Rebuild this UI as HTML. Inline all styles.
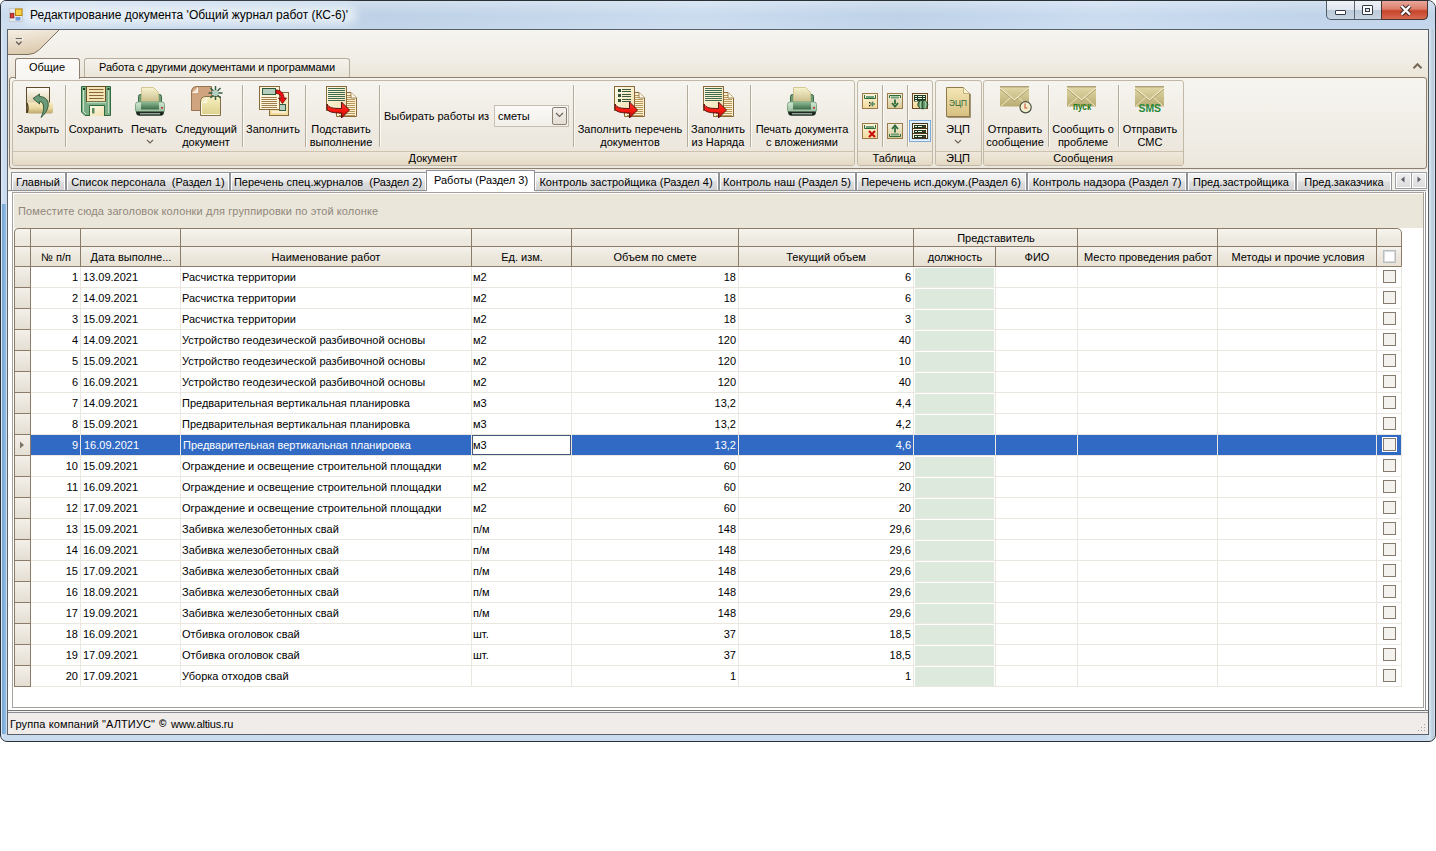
<!DOCTYPE html><html><head><meta charset="utf-8"><style>
*{box-sizing:border-box;margin:0;padding:0}
html,body{width:1436px;height:851px;background:#fff;overflow:hidden;font-family:"Liberation Sans",sans-serif;font-size:11px;color:#000}
.a{position:absolute}
.t{position:absolute;white-space:nowrap;line-height:13px}
svg{overflow:visible}
</style></head><body>
<div class="a" style="left:0px;top:0px;width:1436px;height:742px;background:linear-gradient(90deg,#dde9f6 0,#cbdcef 3px,#c8daee 1425px,#d6e4f0 1429px,#bccddd 1431px,#bccddd 1433px,#e6f2fb 1434px);border:1px solid #2b3036;border-radius:6px 8px 7px 7px"></div>
<div class="a" style="left:1px;top:1px;width:1434px;height:28px;background:linear-gradient(90deg,#c6d9ee,#b8cde4 380px,#c6d9ee 700px,#b9cee6 900px,#c6d9ef 1100px,#bbd0e8 1300px);border-radius:5px 7px 0 0"></div>
<div class="a" style="left:1px;top:1px;width:1434px;height:28px;background:linear-gradient(rgba(255,255,255,0.35),rgba(255,255,255,0.08) 14px,rgba(255,255,255,0.15) 28px);border-radius:5px 7px 0 0"></div>
<div class="a" style="left:22px;top:6px;width:335px;height:18px;background:rgba(240,245,250,0.75);border-radius:9px;filter:blur(4px)"></div>
<svg class="a" style="left:9px;top:8px" width="14" height="14" viewBox="0 0 14 14"><rect x="0.5" y="0.5" width="13" height="13" fill="#e6eaee" stroke="#c8ccd0"/><rect x="6.5" y="1" width="6.5" height="6.5" fill="#f6d04a" stroke="#b8860b"/><rect x="1.3" y="5.3" width="3.6" height="4.6" fill="#d9383a" stroke="#8c1c1c" stroke-width="0.8"/><rect x="6.5" y="9" width="5" height="3.5" fill="#6f9be0"/></svg>
<div class="t" style="left:30px;top:8px;font-size:12px;line-height:14px">Редактирование документа 'Общий журнал работ (КС-6)'</div>
<div class="a" style="left:1326px;top:1px;width:102px;height:19px;border:1px solid #4f5a66;border-top:none;border-radius:0 0 5px 5px;background:linear-gradient(#eef2f7,#dfe6ee 50%,#bccad9 51%,#c8d5e3);overflow:hidden"></div>
<div class="a" style="left:1354px;top:1px;width:1px;height:18px;background:#5c6570"></div>
<div class="a" style="left:1381px;top:1px;width:47px;height:19px;border:1px solid #4a3430;border-top:none;border-radius:0 0 5px 0;background:linear-gradient(#e9a89a,#dc7d6a 45%,#c8442a 55%,#d56a52)"></div>
<div class="a" style="left:1335px;top:10px;width:11px;height:5px;border:1px solid #353b42;background:#fff;border-radius:1px"></div>
<div class="a" style="left:1362px;top:5px;width:11px;height:10px;border:1px solid #353b42;background:#fff;border-radius:1px"></div>
<div class="a" style="left:1365px;top:8px;width:5px;height:4px;border:1px solid #353b42;background:#dde4ec"></div>
<svg class="a" style="left:1399px;top:4px" width="14" height="12" viewBox="0 0 14 12"><path d="M2.5 2 L11 10.5 M11 2 L2.5 10.5" stroke="#3a2a28" stroke-width="4.4" fill="none"/><path d="M2.5 2 L11 10.5 M11 2 L2.5 10.5" stroke="#fff" stroke-width="2.4" fill="none"/></svg>
<div class="a" style="left:2px;top:204px;width:4px;height:530px;background:linear-gradient(90deg,#74a6d5,#82b0da 2px,#95bfe3)"></div>
<div class="a" style="left:7px;top:29px;width:1422px;height:706px;border:1px solid #5a6068;background:#f3f1ec"></div>
<div class="a" style="left:8px;top:30px;width:1420px;height:140px;background:linear-gradient(#f6f4f0 0,#f1eee7 28px,#ece6d9 46px,#e9e2d3 48px,#efebe2 140px)"></div>
<svg class="a" style="left:8px;top:30px" width="60" height="26" viewBox="0 0 60 26"><defs><linearGradient id="qg" x1="0" y1="0" x2="0.3" y2="1"><stop offset="0" stop-color="#f5efe4"/><stop offset="1" stop-color="#dcc9ad"/></linearGradient></defs><path d="M0 0 L51 0 L31.5 19.5 Q26.5 24.5 20 24.5 L0 24.5 Z" fill="url(#qg)"/><path d="M51 0 L31.5 19.5 Q26.5 24.5 20 24.5 L0 24.5" fill="none" stroke="#7e705f" stroke-width="1"/></svg>
<svg class="a" style="left:14px;top:37px" width="10" height="10" viewBox="0 0 10 10"><g stroke="#fff" stroke-width="2.4" fill="none" stroke-linecap="round" opacity="0.75"><path d="M1.5 1.5 H8"/><path d="M2.5 4.8 L4.8 7 L7 4.8"/></g><path d="M1.5 1.5 H8" stroke="#6e6455" stroke-width="1.2"/><path d="M2 4.5 L4.8 7.3 L7.6 4.5" stroke="#6e6455" stroke-width="1.6" fill="none"/></svg>
<div class="a" style="left:84px;top:58px;width:266px;height:20px;border:1px solid #b9ad9b;border-bottom:none;border-radius:3px 3px 0 0;background:linear-gradient(#f5f2ec,#ebe5d8)"></div>
<div class="a" style="left:9px;top:77px;width:1418px;height:92px;border:1px solid #8e8070;border-radius:3px;background:linear-gradient(#f6f4ef,#f0ede6 60px,#ece7dd)"></div>
<div class="a" style="left:15px;top:58px;width:65px;height:21px;border:1px solid #8e8070;border-bottom:none;border-radius:3px 3px 0 0;background:linear-gradient(#fbfaf8,#f8f6f2)"></div>
<div class="t" style="left:-103px;width:300px;text-align:center;top:61px;">Общие</div>
<div class="t" style="left:67px;width:300px;text-align:center;top:61px;letter-spacing:-0.14px">Работа с другими документами и программами</div>
<svg class="a" style="left:1412px;top:62px" width="11" height="8" viewBox="0 0 11 8"><path d="M1.5 6.2 L5.5 2.2 L9.5 6.2" stroke="#76695a" stroke-width="2" fill="none"/></svg>
<div class="a" style="left:12px;top:80px;width:843px;height:86px;border:1px solid #c2b8a6;border-radius:3px;background:linear-gradient(#f6f4ef,#f0ece4 40px,#ece6dc 70px)"></div>
<div class="a" style="left:13px;top:151px;width:841px;height:14px;border-top:1px solid #cdc2ae;background:linear-gradient(#efe9dc,#e4d9c3);border-radius:0 0 2px 2px"></div>
<div class="t" style="left:283px;width:300px;text-align:center;top:152px;">Документ</div>
<div class="a" style="left:857px;top:80px;width:76px;height:86px;border:1px solid #c2b8a6;border-radius:3px;background:linear-gradient(#f6f4ef,#f0ece4 40px,#ece6dc 70px)"></div>
<div class="a" style="left:858px;top:151px;width:74px;height:14px;border-top:1px solid #cdc2ae;background:linear-gradient(#efe9dc,#e4d9c3);border-radius:0 0 2px 2px"></div>
<div class="t" style="left:744px;width:300px;text-align:center;top:152px;">Таблица</div>
<div class="a" style="left:935px;top:80px;width:47px;height:86px;border:1px solid #c2b8a6;border-radius:3px;background:linear-gradient(#f6f4ef,#f0ece4 40px,#ece6dc 70px)"></div>
<div class="a" style="left:936px;top:151px;width:45px;height:14px;border-top:1px solid #cdc2ae;background:linear-gradient(#efe9dc,#e4d9c3);border-radius:0 0 2px 2px"></div>
<div class="t" style="left:808px;width:300px;text-align:center;top:152px;">ЭЦП</div>
<div class="a" style="left:983px;top:80px;width:201px;height:86px;border:1px solid #c2b8a6;border-radius:3px;background:linear-gradient(#f6f4ef,#f0ece4 40px,#ece6dc 70px)"></div>
<div class="a" style="left:984px;top:151px;width:199px;height:14px;border-top:1px solid #cdc2ae;background:linear-gradient(#efe9dc,#e4d9c3);border-radius:0 0 2px 2px"></div>
<div class="t" style="left:933px;width:300px;text-align:center;top:152px;">Сообщения</div>
<div class="a" style="left:65px;top:85px;width:1px;height:62px;background:#b3ab9c"></div>
<div class="a" style="left:66px;top:85px;width:1px;height:62px;background:#fbf9f4"></div>
<div class="a" style="left:242px;top:85px;width:1px;height:62px;background:#b3ab9c"></div>
<div class="a" style="left:243px;top:85px;width:1px;height:62px;background:#fbf9f4"></div>
<div class="a" style="left:305px;top:85px;width:1px;height:62px;background:#b3ab9c"></div>
<div class="a" style="left:306px;top:85px;width:1px;height:62px;background:#fbf9f4"></div>
<div class="a" style="left:379px;top:85px;width:1px;height:62px;background:#b3ab9c"></div>
<div class="a" style="left:380px;top:85px;width:1px;height:62px;background:#fbf9f4"></div>
<div class="a" style="left:573px;top:85px;width:1px;height:62px;background:#b3ab9c"></div>
<div class="a" style="left:574px;top:85px;width:1px;height:62px;background:#fbf9f4"></div>
<div class="a" style="left:687px;top:85px;width:1px;height:62px;background:#b3ab9c"></div>
<div class="a" style="left:688px;top:85px;width:1px;height:62px;background:#fbf9f4"></div>
<div class="a" style="left:750px;top:85px;width:1px;height:62px;background:#b3ab9c"></div>
<div class="a" style="left:751px;top:85px;width:1px;height:62px;background:#fbf9f4"></div>
<div class="a" style="left:882px;top:85px;width:1px;height:62px;background:#b3ab9c"></div>
<div class="a" style="left:883px;top:85px;width:1px;height:62px;background:#fbf9f4"></div>
<div class="a" style="left:907px;top:85px;width:1px;height:62px;background:#b3ab9c"></div>
<div class="a" style="left:908px;top:85px;width:1px;height:62px;background:#fbf9f4"></div>
<div class="a" style="left:1048px;top:85px;width:1px;height:62px;background:#b3ab9c"></div>
<div class="a" style="left:1049px;top:85px;width:1px;height:62px;background:#fbf9f4"></div>
<div class="a" style="left:1118px;top:85px;width:1px;height:62px;background:#b3ab9c"></div>
<div class="a" style="left:1119px;top:85px;width:1px;height:62px;background:#fbf9f4"></div>
<div class="t" style="left:-112px;width:300px;text-align:center;top:123px;">Закрыть</div>
<div class="t" style="left:-54px;width:300px;text-align:center;top:123px;">Сохранить</div>
<div class="t" style="left:-1px;width:300px;text-align:center;top:123px;">Печать</div>
<div class="t" style="left:56px;width:300px;text-align:center;top:123px;">Следующий</div>
<div class="t" style="left:56px;width:300px;text-align:center;top:136px;">документ</div>
<div class="t" style="left:123px;width:300px;text-align:center;top:123px;">Заполнить</div>
<div class="t" style="left:191px;width:300px;text-align:center;top:123px;">Подставить</div>
<div class="t" style="left:191px;width:300px;text-align:center;top:136px;">выполнение</div>
<div class="t" style="left:480px;width:300px;text-align:center;top:123px;">Заполнить перечень</div>
<div class="t" style="left:480px;width:300px;text-align:center;top:136px;">документов</div>
<div class="t" style="left:568px;width:300px;text-align:center;top:123px;">Заполнить</div>
<div class="t" style="left:568px;width:300px;text-align:center;top:136px;">из Наряда</div>
<div class="t" style="left:652px;width:300px;text-align:center;top:123px;">Печать документа</div>
<div class="t" style="left:652px;width:300px;text-align:center;top:136px;">с вложениями</div>
<div class="t" style="left:808px;width:300px;text-align:center;top:123px;">ЭЦП</div>
<div class="t" style="left:865px;width:300px;text-align:center;top:123px;">Отправить</div>
<div class="t" style="left:865px;width:300px;text-align:center;top:136px;">сообщение</div>
<div class="t" style="left:933px;width:300px;text-align:center;top:123px;">Сообщить о</div>
<div class="t" style="left:933px;width:300px;text-align:center;top:136px;">проблеме</div>
<div class="t" style="left:1000px;width:300px;text-align:center;top:123px;">Отправить</div>
<div class="t" style="left:1000px;width:300px;text-align:center;top:136px;">СМС</div>
<svg class="a" style="left:146px;top:139px" width="8" height="5" viewBox="0 0 8 5"><path d="M1 1 L4 4 L7 1" stroke="#6b6155" stroke-width="1.1" fill="none"/></svg>
<svg class="a" style="left:954px;top:139px" width="8" height="5" viewBox="0 0 8 5"><path d="M1 1 L4 4 L7 1" stroke="#6b6155" stroke-width="1.1" fill="none"/></svg>
<div class="t" style="left:384px;top:110px;">Выбирать работы из</div>
<div class="a" style="left:494px;top:105px;width:75px;height:22px;border:1px solid #c7bfb2;background:linear-gradient(#fbfaf8,#f3f0ea)"></div>
<div class="t" style="left:498px;top:110px;">сметы</div>
<div class="a" style="left:552px;top:107px;width:15px;height:18px;border:1px solid #8b8072;border-radius:2px;background:linear-gradient(#f4f2ee,#e4ded3)"></div>
<svg class="a" style="left:555px;top:112px" width="9" height="6" viewBox="0 0 9 6"><path d="M1 1 L4.5 4.5 L8 1" stroke="#6b6155" stroke-width="1.1" fill="none"/></svg>
<svg width="0" height="0" style="position:absolute"><defs>
<linearGradient id="gPage" x1="0" y1="0" x2="0" y2="1"><stop offset="0" stop-color="#fffef8"/><stop offset="1" stop-color="#c9b07a"/></linearGradient>
<linearGradient id="gRoll" x1="0" y1="0" x2="0" y2="1"><stop offset="0" stop-color="#f7ebbd"/><stop offset="0.5" stop-color="#e9d9a0"/><stop offset="1" stop-color="#bca56c"/></linearGradient>
<linearGradient id="gCream" x1="0" y1="0" x2="1" y2="1"><stop offset="0" stop-color="#fffbe8"/><stop offset="1" stop-color="#f0dfae"/></linearGradient>
<linearGradient id="gPaper" x1="0" y1="0" x2="0" y2="1"><stop offset="0" stop-color="#f8f3cf"/><stop offset="1" stop-color="#c6b986"/></linearGradient>
<linearGradient id="gPrFront" x1="0" y1="0" x2="0" y2="1"><stop offset="0" stop-color="#8dbb95"/><stop offset="1" stop-color="#3c6c47"/></linearGradient>
<linearGradient id="gPrBody" x1="0" y1="0" x2="0" y2="1"><stop offset="0" stop-color="#d4e9d4"/><stop offset="1" stop-color="#93b99a"/></linearGradient>
<linearGradient id="gYel" x1="0" y1="0" x2="0" y2="1"><stop offset="0" stop-color="#f6f0c2"/><stop offset="1" stop-color="#ddd08a"/></linearGradient>
<linearGradient id="gEcp" x1="0" y1="0" x2="0" y2="1"><stop offset="0" stop-color="#f4e7b6"/><stop offset="1" stop-color="#d7bf80"/></linearGradient>
<linearGradient id="gEnv" x1="0" y1="0" x2="0" y2="1"><stop offset="0" stop-color="#e2d9a8"/><stop offset="1" stop-color="#b9ab72"/></linearGradient>
<linearGradient id="gRed" x1="0" y1="0" x2="0" y2="1"><stop offset="0" stop-color="#e83a2a"/><stop offset="0.5" stop-color="#ff1a10"/><stop offset="1" stop-color="#a8100e"/></linearGradient>
<linearGradient id="gSm" x1="0" y1="0" x2="0" y2="1"><stop offset="0" stop-color="#fdf6dc"/><stop offset="1" stop-color="#f1d99a"/></linearGradient>
<linearGradient id="gSm2" x1="0" y1="0" x2="0" y2="1"><stop offset="0" stop-color="#f4f0dc"/><stop offset="1" stop-color="#d8cb98"/></linearGradient>
</defs></svg>
<svg class="a" style="left:20px;top:82px" width="40" height="40" viewBox="0 0 40 40"><rect x="6.5" y="5.5" width="23" height="25" fill="url(#gPage)" stroke="#5e4a2c"/><rect x="7" y="20.5" width="26" height="11" rx="2" fill="url(#gRoll)"/><path d="M7 21 Q9 26 7 31" stroke="#4a3a20" stroke-width="1.4" fill="none"/><path d="M13 16.5 L19.5 12 L19.5 14.5 C25.5 14.5 29.5 19 28 25 C27 29 24.5 32.5 21 35.5 C23 31.5 24 27.5 23.5 24 C23 21 21.5 19.5 19.5 19.5 L19.5 22 Z" fill="#6a9a78" stroke="#2e5438" stroke-width="0.9"/></svg>
<svg class="a" style="left:76px;top:82px" width="40" height="40" viewBox="0 0 40 40"><path d="M5.5 4.5 H34.5 V33.5 H9 L5.5 30 Z" fill="#7eae88" stroke="#2f6a3c"/><path d="M7.5 7 V29.5 L10 32" stroke="#c9e6cc" stroke-width="1" fill="none"/><rect x="10.5" y="4.5" width="19" height="15" fill="#f4e3b6" stroke="#6a4f20"/><g stroke="#8a6834" stroke-width="1"><path d="M13 7.5 H27.5 M13 10.5 H27.5 M13 13.5 H27.5 M13 16.5 H27.5"/></g><path d="M11 20.5 H30" stroke="#b7dbbd" stroke-width="1.5"/><path d="M13.5 34 V23.5 H28.5 V34" fill="url(#gCream)" stroke="#2f6a3c"/><path d="M32.5 7 V31" stroke="#b9dcbf" stroke-width="1"/><rect x="16" y="26" width="2.5" height="5.5" fill="#5b8a62"/><rect x="7" y="6" width="2" height="2" fill="#1f3a25"/><rect x="31.5" y="6" width="2" height="2" fill="#1f3a25"/></svg>
<svg class="a" style="left:130px;top:82px" width="40" height="40" viewBox="0 0 40 40"><rect x="8.5" y="12.5" width="23" height="9" rx="2" fill="#6f9d78" stroke="#3a6643"/><path d="M11.5 5.5 H23.5 L28.5 10.5 V21 H11.5 Z" fill="url(#gPaper)" stroke="#c9bd80" stroke-width="0.8"/><rect x="5.5" y="20" width="29" height="10.5" rx="2.5" fill="url(#gPrBody)" stroke="#6a9872" stroke-width="0.8"/><rect x="11" y="20" width="18" height="7.5" fill="url(#gPrFront)"/><path d="M6 29.5 H34 Q34 33.8 30.5 33.8 H9.5 Q6 33.8 6 29.5 Z" fill="#1d2a20"/><path d="M10 31.8 H30" stroke="#c3d8c6" stroke-width="1"/><rect x="31" y="25" width="2" height="1.6" fill="#c03030"/></svg>
<svg class="a" style="left:782px;top:82px" width="40" height="40" viewBox="0 0 40 40"><rect x="8.5" y="12.5" width="23" height="9" rx="2" fill="#6f9d78" stroke="#3a6643"/><path d="M11.5 5.5 H23.5 L28.5 10.5 V21 H11.5 Z" fill="url(#gPaper)" stroke="#c9bd80" stroke-width="0.8"/><rect x="5.5" y="20" width="29" height="10.5" rx="2.5" fill="url(#gPrBody)" stroke="#6a9872" stroke-width="0.8"/><rect x="11" y="20" width="18" height="7.5" fill="url(#gPrFront)"/><path d="M6 29.5 H34 Q34 33.8 30.5 33.8 H9.5 Q6 33.8 6 29.5 Z" fill="#1d2a20"/><path d="M10 31.8 H30" stroke="#c3d8c6" stroke-width="1"/><rect x="31" y="25" width="2" height="1.6" fill="#c03030"/></svg>
<svg class="a" style="left:186px;top:82px" width="40" height="40" viewBox="0 0 40 40"><path d="M11 4.5 H25.5 V28.5 H5.5 V10 Q5.5 4.5 11 4.5 Z" fill="#cfa47f" stroke="#9a7552"/><path d="M6.5 10.5 H11.5 V5.5" fill="#f4e2d0" stroke="#fffaf4" stroke-width="0.9"/><path d="M20 14.5 H34.5 V33.5 H14.5 V20 Q14.5 14.5 20 14.5 Z" fill="url(#gYel)" stroke="#85704a"/><path d="M15.5 20.5 V32.5 H33.5" stroke="#fffbe8" stroke-width="1" fill="none"/><path d="M15.5 20.5 H20.5 V15.5" fill="#f8f2d2" stroke="#fffdf0" stroke-width="0.9"/><g stroke="#355e45" stroke-width="1.5"><path d="M29.5 4 V18 M22.5 11 H36.5 M24.5 6 L34.5 16 M34.5 6 L24.5 16"/></g><circle cx="29.5" cy="11" r="3" fill="#b3cfbf"/></svg>
<svg class="a" style="left:254px;top:82px" width="40" height="40" viewBox="0 0 40 40"><rect x="15.5" y="10.5" width="19" height="23" fill="url(#gSm)" stroke="#8a6a3a"/><rect x="25.5" y="22.5" width="6" height="6" fill="#b6cfbf" stroke="#2f5c3d"/><path d="M18 30 H32" stroke="#fff" stroke-width="1"/><rect x="5.5" y="4.5" width="20" height="23" fill="#fdf6dc" stroke="#8a6a3a"/><rect x="8.5" y="6.5" width="13" height="6" fill="#b4cdbd" stroke="#2f5c3d"/><g stroke="#a07e4a" stroke-width="1"><path d="M7.5 15.5 H23 M7.5 17.5 H23 M7.5 19.5 H23 M7.5 21.5 H23 M7.5 23.5 H23 M7.5 25.5 H23"/></g><path d="M22 8 C26 8 30 10.5 30 16 L32.5 16 L28.5 21.5 L24.5 16 L27 16 C27 13 25 11.5 22 11.5 Z" fill="#f01010" stroke="#6a0808" stroke-width="0.8"/></svg>
<svg class="a" style="left:320px;top:82px" width="40" height="40" viewBox="0 0 40 40"><path d="M16.5 10.5 H31 L36.5 16 V34.5 H16.5 Z" fill="#fbf0cf" stroke="#8a6a3a"/><path d="M19 13.5 H35 M19 15.5 H35 M19 17.5 H35 M19 19.5 H35 M19 21.5 H35 M19 23.5 H35 M19 25.5 H35 M19 27.5 H35 M19 29.5 H35 M19 31.5 H35 M19 33.5 H35 " stroke="#b9975a" stroke-width="1"/><path d="M31 10.5 V16 H36.5" fill="#fffbe8" stroke="#8a6a3a" stroke-width="0.8"/><rect x="6.5" y="4.5" width="20" height="24" fill="url(#gCream)" stroke="#8a6a3a"/><g stroke="#3f6a4e" stroke-width="1"><path d="M8 6.5 H25 M8 8.5 H25 M8 10.5 H25 M8 12.5 H25 M8 14.5 H25 M8 16.5 H25 M8 18.5 H25"/></g><path d="M7 22 C9 26 13 26.5 21.5 26.5 V20 L29.5 28 L21.5 36 V31 C13 31 8.5 30 7 27 Z" fill="url(#gRed)" stroke="#4a0a0a" stroke-width="0.9"/></svg>
<svg class="a" style="left:608px;top:82px" width="40" height="40" viewBox="0 0 40 40"><path d="M16.5 10.5 H31 L36.5 16 V34.5 H16.5 Z" fill="#fbf0cf" stroke="#8a6a3a"/><path d="M19 13.5 H35 M19 15.5 H35 M19 17.5 H35 M19 19.5 H35 M19 21.5 H35 M19 23.5 H35 M19 25.5 H35 M19 27.5 H35 M19 29.5 H35 M19 31.5 H35 M19 33.5 H35 " stroke="#b9975a" stroke-width="1"/><path d="M31 10.5 V16 H36.5" fill="#fffbe8" stroke="#8a6a3a" stroke-width="0.8"/><rect x="6.5" y="4.5" width="20" height="24" fill="url(#gCream)" stroke="#8a6a3a"/><g fill="#2f4f35"><rect x="10" y="7" width="3" height="3"/><rect x="10" y="12" width="3" height="3"/><rect x="10" y="17" width="3" height="3"/></g><g stroke="#3a5a40" stroke-width="1"><path d="M14 7.5 H23 M14 9.5 H23 M14 12.5 H23 M14 14.5 H23 M14 17.5 H23 M14 19.5 H23"/></g><path d="M7 22 C9 26 13 26.5 21.5 26.5 V20 L29.5 28 L21.5 36 V31 C13 31 8.5 30 7 27 Z" fill="url(#gRed)" stroke="#4a0a0a" stroke-width="0.9"/></svg>
<svg class="a" style="left:698px;top:82px" width="40" height="40" viewBox="0 0 40 40"><path d="M15.5 10.5 H30 L35.5 16 V34.5 H15.5 Z" fill="#fbf0cf" stroke="#8a6a3a"/><path d="M18 13.5 H34 M18 15.5 H34 M18 17.5 H34 M18 19.5 H34 M18 21.5 H34 M18 23.5 H34 M18 25.5 H34 M18 27.5 H34 M18 29.5 H34 M18 31.5 H34 M18 33.5 H34 " stroke="#b9975a" stroke-width="1"/><path d="M30 10.5 V16 H35.5" fill="#fffbe8" stroke="#8a6a3a" stroke-width="0.8"/><rect x="5.5" y="4.5" width="20" height="24" fill="url(#gCream)" stroke="#8a6a3a"/><g stroke="#3f6a4e" stroke-width="1"><path d="M7 6.5 H24 M7 8.5 H24 M7 10.5 H24 M7 12.5 H24 M7 14.5 H24 M7 16.5 H24 M7 18.5 H24"/></g><path d="M6 22 C8 26 12 26.5 20.5 26.5 V20 L28.5 28 L20.5 36 V31 C12 31 7.5 30 6 27 Z" fill="url(#gRed)" stroke="#4a0a0a" stroke-width="0.9"/></svg>
<svg class="a" style="left:936px;top:82px" width="40" height="40" viewBox="0 0 40 40"><path d="M10.5 5.5 H27.5 L33.5 11.5 V34.5 H10.5 Z" fill="url(#gEcp)" stroke="#8f7a4a"/><path d="M11.5 35.5 H34.5 V12" stroke="#6d5a30" stroke-width="1" fill="none" opacity="0.6"/><path d="M27.5 5.5 V11.5 H33.5" fill="#fbf3d6" stroke="#b8a270" stroke-width="0.8"/><text x="13" y="24.2" textLength="18" lengthAdjust="spacingAndGlyphs" font-family="Liberation Sans" font-size="9.8" fill="#336a38">ЭЦП</text></svg>
<svg class="a" style="left:996px;top:82px" width="40" height="40" viewBox="0 0 40 40"><rect x="4" y="4.5" width="29" height="20" fill="url(#gEnv)"/><path d="M4 4.8 H33" stroke="#8f8458" stroke-width="1"/><path d="M4 6 L18.5 18 L33 6" stroke="#f4eccc" stroke-width="1.2" fill="none"/><path d="M4 7 L18.5 19 L33 7" stroke="#9c8f5c" stroke-width="0.8" fill="none"/><path d="M5 24 L14.5 15.5 M32 24 L22.5 15.5" stroke="#efe6c4" stroke-width="1" fill="none"/><circle cx="29.6" cy="25.3" r="5.6" fill="#f3efcd" stroke="#4d5245" stroke-width="1.2"/><path d="M29 21.5 V26 H31.5" stroke="#d04a3a" stroke-width="1.1" fill="none"/></svg>
<svg class="a" style="left:1062px;top:82px" width="40" height="40" viewBox="0 0 40 40"><rect x="5" y="4.5" width="29" height="20" fill="url(#gEnv)"/><path d="M5 4.8 H34" stroke="#8f8458" stroke-width="1"/><path d="M5 6 L19.5 18 L34 6" stroke="#f4eccc" stroke-width="1.2" fill="none"/><path d="M5 7 L19.5 19 L34 7" stroke="#9c8f5c" stroke-width="0.8" fill="none"/><path d="M6 24 L15.5 15.5 M33 24 L23.5 15.5" stroke="#efe6c4" stroke-width="1" fill="none"/><text x="11" y="27.8" textLength="18" lengthAdjust="spacingAndGlyphs" font-family="Liberation Sans" font-weight="bold" font-size="10.5" fill="#257a18">пуск</text></svg>
<svg class="a" style="left:1130px;top:82px" width="40" height="40" viewBox="0 0 40 40"><rect x="5" y="4.5" width="29" height="20" fill="url(#gEnv)"/><path d="M5 4.8 H34" stroke="#8f8458" stroke-width="1"/><path d="M5 6 L19.5 18 L34 6" stroke="#f4eccc" stroke-width="1.2" fill="none"/><path d="M5 7 L19.5 19 L34 7" stroke="#9c8f5c" stroke-width="0.8" fill="none"/><path d="M6 24 L15.5 15.5 M33 24 L23.5 15.5" stroke="#efe6c4" stroke-width="1" fill="none"/><text x="8.5" y="29.6" textLength="22.5" lengthAdjust="spacingAndGlyphs" font-family="Liberation Sans" font-weight="bold" font-size="11.3" fill="#2a8a3a">SMS</text></svg>
<svg class="a" style="left:862px;top:93px" width="16" height="16" viewBox="0 0 16 16"><rect x="0.5" y="0.5" width="15" height="15" fill="url(#gSm)" stroke="#9a7a48"/><path d="M2.5 2 V5.5 H13.5 V2" stroke="#2f6a3c" stroke-width="1" fill="none"/><rect x="4" y="3" width="8" height="2" fill="#6fa27c"/><path d="M10.5 8.5 V13.5 M8 11 H13" stroke="#5a8a66" stroke-width="1.6"/><rect x="7" y="9" width="1.3" height="1.3" fill="#111"/><rect x="7" y="12" width="1.3" height="1.3" fill="#111"/></svg>
<svg class="a" style="left:887px;top:93px" width="16" height="16" viewBox="0 0 16 16"><rect x="0.5" y="0.5" width="15" height="15" fill="url(#gSm2)" stroke="#9a7a48"/><path d="M2.5 5 V2.5 H13.5 V5" stroke="#2f6a3c" stroke-width="1" fill="none"/><rect x="4" y="3.5" width="8" height="2" fill="#6fa27c"/><path d="M8 6.5 V11 M5 10 L8 13.5 L11 10" stroke="#2f6a3c" stroke-width="1.8" fill="none"/></svg>
<svg class="a" style="left:912px;top:93px" width="16" height="16" viewBox="0 0 16 16"><rect x="0.5" y="0.5" width="15" height="15" fill="url(#gSm)" stroke="#6a4a2a"/><rect x="2" y="2" width="12" height="6.5" fill="#1f3a22"/><g fill="#e6f2e0"><rect x="3" y="3" width="2" height="1"/><rect x="6" y="3" width="4" height="1"/><rect x="11" y="3" width="2" height="1"/><rect x="3" y="5" width="2" height="1"/><rect x="6" y="5" width="4" height="1"/><rect x="11" y="5" width="2" height="1"/><rect x="3" y="7" width="2" height="1"/></g><ellipse cx="10.8" cy="11.6" rx="5" ry="4.2" fill="#5f9466" stroke="#22452a" stroke-width="1"/><path d="M9 8 Q7.6 11.6 9 15.4 M12.8 7.8 Q14.6 11.6 12.8 15.4" stroke="#a3d0a8" stroke-width="1.1" fill="none"/><path d="M10.8 7.5 Q9.8 11.6 10.8 15.8" stroke="#22452a" stroke-width="0.9" fill="none"/></svg>
<svg class="a" style="left:862px;top:123px" width="16" height="16" viewBox="0 0 16 16"><rect x="0.5" y="0.5" width="15" height="15" fill="url(#gSm)" stroke="#9a7a48"/><path d="M2.5 2 V5.5 H13.5 V2" stroke="#2f6a3c" stroke-width="1" fill="none"/><rect x="4" y="3" width="8" height="2" fill="#6fa27c"/><path d="M7 8 L13 14 M13 8 L7 14" stroke="#c81010" stroke-width="2.2"/></svg>
<svg class="a" style="left:887px;top:123px" width="16" height="16" viewBox="0 0 16 16"><rect x="0.5" y="0.5" width="15" height="15" fill="url(#gSm2)" stroke="#9a7a48"/><path d="M2.5 11 V13.5 H13.5 V11" stroke="#2f6a3c" stroke-width="1" fill="none"/><rect x="4" y="10.5" width="8" height="2" fill="#6fa27c"/><path d="M8 9.5 V4.5 M5 6 L8 2.5 L11 6" stroke="#2f6a3c" stroke-width="1.8" fill="none"/></svg>
<div class="a" style="left:909px;top:120px;width:22px;height:22px;border:1px solid #7ea9d6;background:linear-gradient(#d8ecfc,#c4e2fa);box-shadow:inset 0 0 0 1px #e4f2fd"></div>
<svg class="a" style="left:912px;top:123px" width="16" height="16" viewBox="0 0 16 16"><rect x="0" y="0" width="16" height="16" fill="#4a3520"/><rect x="1" y="1" width="14" height="4" fill="#fff6e0"/><rect x="2" y="2" width="12" height="3" fill="#1f3a22"/><rect x="3" y="3" width="2" height="1" fill="#e6f2e0"/><rect x="6" y="3" width="4" height="1" fill="#e6f2e0"/><rect x="11" y="3" width="2" height="1" fill="#7a3020"/><rect x="1" y="6" width="14" height="4" fill="#fff6e0"/><rect x="2" y="7" width="12" height="3" fill="#1f3a22"/><rect x="3" y="8" width="2" height="1" fill="#e6f2e0"/><rect x="6" y="8" width="4" height="1" fill="#e6f2e0"/><rect x="11" y="8" width="2" height="1" fill="#7a3020"/><rect x="1" y="11" width="14" height="4" fill="#fff6e0"/><rect x="2" y="12" width="12" height="3" fill="#1f3a22"/><rect x="3" y="13" width="2" height="1" fill="#e6f2e0"/><rect x="6" y="13" width="4" height="1" fill="#e6f2e0"/><rect x="11" y="13" width="2" height="1" fill="#7a3020"/></svg>
<div class="a" style="left:8px;top:170px;width:1420px;height:23px;background:#f3f1ec"></div>
<div class="a" style="left:8px;top:190px;width:1418px;height:1px;background:#8f9296"></div>
<div class="a" style="left:11px;top:172px;width:55px;height:19px;border:1px solid #8f9296;background:linear-gradient(#f4f4f4,#ececec 8px,#dedede 9px,#d2d2d2);box-shadow:inset 1px 1px 0 #fff,inset -1px 0 0 #fff"></div>
<div class="t" style="left:-112px;width:300px;text-align:center;top:176px;">Главный</div>
<div class="a" style="left:66px;top:172px;width:164px;height:19px;border:1px solid #8f9296;background:linear-gradient(#f4f4f4,#ececec 8px,#dedede 9px,#d2d2d2);box-shadow:inset 1px 1px 0 #fff,inset -1px 0 0 #fff"></div>
<div class="t" style="left:-2px;width:300px;text-align:center;top:176px;">Список персонала&nbsp; (Раздел 1)</div>
<div class="a" style="left:230px;top:172px;width:197px;height:19px;border:1px solid #8f9296;background:linear-gradient(#f4f4f4,#ececec 8px,#dedede 9px,#d2d2d2);box-shadow:inset 1px 1px 0 #fff,inset -1px 0 0 #fff"></div>
<div class="t" style="left:178px;width:300px;text-align:center;top:176px;">Перечень спец.журналов&nbsp; (Раздел 2)</div>
<div class="a" style="left:534px;top:172px;width:185px;height:19px;border:1px solid #8f9296;background:linear-gradient(#f4f4f4,#ececec 8px,#dedede 9px,#d2d2d2);box-shadow:inset 1px 1px 0 #fff,inset -1px 0 0 #fff"></div>
<div class="t" style="left:476px;width:300px;text-align:center;top:176px;">Контроль застройщика (Раздел 4)</div>
<div class="a" style="left:719px;top:172px;width:137px;height:19px;border:1px solid #8f9296;background:linear-gradient(#f4f4f4,#ececec 8px,#dedede 9px,#d2d2d2);box-shadow:inset 1px 1px 0 #fff,inset -1px 0 0 #fff"></div>
<div class="t" style="left:637px;width:300px;text-align:center;top:176px;">Контроль наш (Раздел 5)</div>
<div class="a" style="left:856px;top:172px;width:171px;height:19px;border:1px solid #8f9296;background:linear-gradient(#f4f4f4,#ececec 8px,#dedede 9px,#d2d2d2);box-shadow:inset 1px 1px 0 #fff,inset -1px 0 0 #fff"></div>
<div class="t" style="left:791px;width:300px;text-align:center;top:176px;">Перечень исп.докум.(Раздел 6)</div>
<div class="a" style="left:1027px;top:172px;width:160px;height:19px;border:1px solid #8f9296;background:linear-gradient(#f4f4f4,#ececec 8px,#dedede 9px,#d2d2d2);box-shadow:inset 1px 1px 0 #fff,inset -1px 0 0 #fff"></div>
<div class="t" style="left:957px;width:300px;text-align:center;top:176px;">Контроль надзора (Раздел 7)</div>
<div class="a" style="left:1187px;top:172px;width:109px;height:19px;border:1px solid #8f9296;background:linear-gradient(#f4f4f4,#ececec 8px,#dedede 9px,#d2d2d2);box-shadow:inset 1px 1px 0 #fff,inset -1px 0 0 #fff"></div>
<div class="t" style="left:1091px;width:300px;text-align:center;top:176px;">Пред.застройщика</div>
<div class="a" style="left:1296px;top:172px;width:96px;height:19px;border:1px solid #8f9296;background:linear-gradient(#f4f4f4,#ececec 8px,#dedede 9px,#d2d2d2);box-shadow:inset 1px 1px 0 #fff,inset -1px 0 0 #fff"></div>
<div class="t" style="left:1194px;width:300px;text-align:center;top:176px;">Пред.заказчика</div>
<div class="a" style="left:426px;top:170px;width:109px;height:22px;border:1px solid #8f9296;border-bottom:none;background:#fff"></div>
<div class="t" style="left:434px;top:174px;">Работы (Раздел 3)</div>
<div class="a" style="left:1395px;top:172px;width:32px;height:17px;border:1px solid #9c9fa3;background:#f4f4f4"></div>
<div class="a" style="left:1396px;top:173px;width:15px;height:15px;border:1px solid #fff;background:linear-gradient(#eeeeee,#dcdcdc)"></div>
<div class="a" style="left:1411px;top:172px;width:1px;height:17px;background:#9c9fa3"></div>
<div class="a" style="left:1412px;top:173px;width:14px;height:15px;border:1px solid #fff;background:linear-gradient(#eeeeee,#dcdcdc)"></div>
<svg class="a" style="left:1400px;top:176px" width="6" height="7" viewBox="0 0 6 7"><path d="M4.5 0.5 L1 3.5 L4.5 6.5 Z" fill="#5c5e68"/></svg>
<svg class="a" style="left:1416px;top:176px" width="6" height="7" viewBox="0 0 6 7"><path d="M1.5 0.5 L5 3.5 L1.5 6.5 Z" fill="#5c5e68"/></svg>
<div class="a" style="left:8px;top:192px;width:1420px;height:519px;background:#fff"></div>
<div class="a" style="left:12px;top:192px;width:1412px;height:516px;border:1px solid #a6a29b;background:#fff"></div>
<div class="a" style="left:426px;top:191px;width:109px;height:1px;background:#fff"></div>
<div class="a" style="left:8px;top:710px;width:1420px;height:1px;background:#707478"></div>
<div class="a" style="left:1425px;top:192px;width:1px;height:519px;background:#8e9094"></div>
<div class="a" style="left:14px;top:194px;width:1409px;height:34px;background:#ebe6da"></div>
<div class="t" style="left:18px;top:205px;color:#8f877a;letter-spacing:0.11px">Поместите сюда заголовок колонки для группировки по этой колонке</div>
<div class="a" style="left:14px;top:228px;width:1388px;height:39px;border:1px solid #8c7b69;border-radius:4px 5px 0 0;background:linear-gradient(#f7f5f0,#eeeae1 10px,#e9e3d6);overflow:hidden"></div>
<div class="a" style="left:15px;top:247px;width:1386px;height:19px;background:linear-gradient(#f4f2ec,#ece7dc 10px,#e8e2d5)"></div>
<div class="a" style="left:15px;top:246px;width:1386px;height:1px;background:#8c7b69"></div>
<div class="a" style="left:15px;top:266px;width:1386px;height:1px;background:#8c7b69"></div>
<div class="a" style="left:30px;top:229px;width:1px;height:37px;background:#8c7b69"></div>
<div class="a" style="left:80px;top:229px;width:1px;height:37px;background:#8c7b69"></div>
<div class="a" style="left:180px;top:229px;width:1px;height:37px;background:#8c7b69"></div>
<div class="a" style="left:471px;top:229px;width:1px;height:37px;background:#8c7b69"></div>
<div class="a" style="left:571px;top:229px;width:1px;height:37px;background:#8c7b69"></div>
<div class="a" style="left:738px;top:229px;width:1px;height:37px;background:#8c7b69"></div>
<div class="a" style="left:913px;top:229px;width:1px;height:37px;background:#8c7b69"></div>
<div class="a" style="left:995px;top:247px;width:1px;height:19px;background:#8c7b69"></div>
<div class="a" style="left:1077px;top:229px;width:1px;height:37px;background:#8c7b69"></div>
<div class="a" style="left:1217px;top:229px;width:1px;height:37px;background:#8c7b69"></div>
<div class="a" style="left:1376px;top:229px;width:1px;height:37px;background:#8c7b69"></div>
<div class="t" style="left:-94px;width:300px;text-align:center;top:251px;">№ п/п</div>
<div class="t" style="left:-19px;width:300px;text-align:center;top:251px;">Дата выполне...</div>
<div class="t" style="left:176px;width:300px;text-align:center;top:251px;">Наименование работ</div>
<div class="t" style="left:372px;width:300px;text-align:center;top:251px;">Ед. изм.</div>
<div class="t" style="left:505px;width:300px;text-align:center;top:251px;">Объем по смете</div>
<div class="t" style="left:676px;width:300px;text-align:center;top:251px;">Текущий объем</div>
<div class="t" style="left:805px;width:300px;text-align:center;top:251px;">должность</div>
<div class="t" style="left:887px;width:300px;text-align:center;top:251px;">ФИО</div>
<div class="t" style="left:998px;width:300px;text-align:center;top:251px;">Место проведения работ</div>
<div class="t" style="left:1148px;width:300px;text-align:center;top:251px;">Методы и прочие условия</div>
<div class="t" style="left:846px;width:300px;text-align:center;top:232px;">Представитель</div>
<div class="a" style="left:1383px;top:250px;width:13px;height:13px;border:1px solid #b9bcc0;background:#fff"></div>
<div class="a" style="left:1384px;top:251px;width:11px;height:11px;border:1px solid #d8dadc;background:#fff"></div>
<div class="a" style="left:14px;top:267px;width:1px;height:420px;background:#8c7b69"></div>
<div class="a" style="left:15px;top:267px;width:15px;height:20px;background:linear-gradient(#f3f0ea,#e4ded2)"></div>
<div class="a" style="left:15px;top:287px;width:15px;height:1px;background:#8c7b69"></div>
<div class="a" style="left:31px;top:287px;width:1370px;height:1px;background:#eae7e0"></div>
<div class="a" style="left:915px;top:268px;width:79px;height:19px;background:#dde9dc"></div>
<div class="t" style="left:30px;width:48px;text-align:right;top:271px;color:#000">1</div>
<div class="t" style="left:83px;top:271px;color:#000">13.09.2021</div>
<div class="t" style="left:182px;top:271px;color:#000">Расчистка территории</div>
<div class="t" style="left:473px;top:271px;color:#000">м2</div>
<div class="t" style="left:571px;width:165px;text-align:right;top:271px;color:#000">18</div>
<div class="t" style="left:738px;width:173px;text-align:right;top:271px;color:#000">6</div>
<div class="a" style="left:1383px;top:270px;width:13px;height:13px;border:1px solid #857a6b;background:#f4f2ee"></div>
<div class="a" style="left:15px;top:288px;width:15px;height:20px;background:linear-gradient(#f3f0ea,#e4ded2)"></div>
<div class="a" style="left:15px;top:308px;width:15px;height:1px;background:#8c7b69"></div>
<div class="a" style="left:31px;top:308px;width:1370px;height:1px;background:#eae7e0"></div>
<div class="a" style="left:915px;top:289px;width:79px;height:19px;background:#dde9dc"></div>
<div class="t" style="left:30px;width:48px;text-align:right;top:292px;color:#000">2</div>
<div class="t" style="left:83px;top:292px;color:#000">14.09.2021</div>
<div class="t" style="left:182px;top:292px;color:#000">Расчистка территории</div>
<div class="t" style="left:473px;top:292px;color:#000">м2</div>
<div class="t" style="left:571px;width:165px;text-align:right;top:292px;color:#000">18</div>
<div class="t" style="left:738px;width:173px;text-align:right;top:292px;color:#000">6</div>
<div class="a" style="left:1383px;top:291px;width:13px;height:13px;border:1px solid #857a6b;background:#f4f2ee"></div>
<div class="a" style="left:15px;top:309px;width:15px;height:20px;background:linear-gradient(#f3f0ea,#e4ded2)"></div>
<div class="a" style="left:15px;top:329px;width:15px;height:1px;background:#8c7b69"></div>
<div class="a" style="left:31px;top:329px;width:1370px;height:1px;background:#eae7e0"></div>
<div class="a" style="left:915px;top:310px;width:79px;height:19px;background:#dde9dc"></div>
<div class="t" style="left:30px;width:48px;text-align:right;top:313px;color:#000">3</div>
<div class="t" style="left:83px;top:313px;color:#000">15.09.2021</div>
<div class="t" style="left:182px;top:313px;color:#000">Расчистка территории</div>
<div class="t" style="left:473px;top:313px;color:#000">м2</div>
<div class="t" style="left:571px;width:165px;text-align:right;top:313px;color:#000">18</div>
<div class="t" style="left:738px;width:173px;text-align:right;top:313px;color:#000">3</div>
<div class="a" style="left:1383px;top:312px;width:13px;height:13px;border:1px solid #857a6b;background:#f4f2ee"></div>
<div class="a" style="left:15px;top:330px;width:15px;height:20px;background:linear-gradient(#f3f0ea,#e4ded2)"></div>
<div class="a" style="left:15px;top:350px;width:15px;height:1px;background:#8c7b69"></div>
<div class="a" style="left:31px;top:350px;width:1370px;height:1px;background:#eae7e0"></div>
<div class="a" style="left:915px;top:331px;width:79px;height:19px;background:#dde9dc"></div>
<div class="t" style="left:30px;width:48px;text-align:right;top:334px;color:#000">4</div>
<div class="t" style="left:83px;top:334px;color:#000">14.09.2021</div>
<div class="t" style="left:182px;top:334px;color:#000">Устройство геодезической разбивочной основы</div>
<div class="t" style="left:473px;top:334px;color:#000">м2</div>
<div class="t" style="left:571px;width:165px;text-align:right;top:334px;color:#000">120</div>
<div class="t" style="left:738px;width:173px;text-align:right;top:334px;color:#000">40</div>
<div class="a" style="left:1383px;top:333px;width:13px;height:13px;border:1px solid #857a6b;background:#f4f2ee"></div>
<div class="a" style="left:15px;top:351px;width:15px;height:20px;background:linear-gradient(#f3f0ea,#e4ded2)"></div>
<div class="a" style="left:15px;top:371px;width:15px;height:1px;background:#8c7b69"></div>
<div class="a" style="left:31px;top:371px;width:1370px;height:1px;background:#eae7e0"></div>
<div class="a" style="left:915px;top:352px;width:79px;height:19px;background:#dde9dc"></div>
<div class="t" style="left:30px;width:48px;text-align:right;top:355px;color:#000">5</div>
<div class="t" style="left:83px;top:355px;color:#000">15.09.2021</div>
<div class="t" style="left:182px;top:355px;color:#000">Устройство геодезической разбивочной основы</div>
<div class="t" style="left:473px;top:355px;color:#000">м2</div>
<div class="t" style="left:571px;width:165px;text-align:right;top:355px;color:#000">120</div>
<div class="t" style="left:738px;width:173px;text-align:right;top:355px;color:#000">10</div>
<div class="a" style="left:1383px;top:354px;width:13px;height:13px;border:1px solid #857a6b;background:#f4f2ee"></div>
<div class="a" style="left:15px;top:372px;width:15px;height:20px;background:linear-gradient(#f3f0ea,#e4ded2)"></div>
<div class="a" style="left:15px;top:392px;width:15px;height:1px;background:#8c7b69"></div>
<div class="a" style="left:31px;top:392px;width:1370px;height:1px;background:#eae7e0"></div>
<div class="a" style="left:915px;top:373px;width:79px;height:19px;background:#dde9dc"></div>
<div class="t" style="left:30px;width:48px;text-align:right;top:376px;color:#000">6</div>
<div class="t" style="left:83px;top:376px;color:#000">16.09.2021</div>
<div class="t" style="left:182px;top:376px;color:#000">Устройство геодезической разбивочной основы</div>
<div class="t" style="left:473px;top:376px;color:#000">м2</div>
<div class="t" style="left:571px;width:165px;text-align:right;top:376px;color:#000">120</div>
<div class="t" style="left:738px;width:173px;text-align:right;top:376px;color:#000">40</div>
<div class="a" style="left:1383px;top:375px;width:13px;height:13px;border:1px solid #857a6b;background:#f4f2ee"></div>
<div class="a" style="left:15px;top:393px;width:15px;height:20px;background:linear-gradient(#f3f0ea,#e4ded2)"></div>
<div class="a" style="left:15px;top:413px;width:15px;height:1px;background:#8c7b69"></div>
<div class="a" style="left:31px;top:413px;width:1370px;height:1px;background:#eae7e0"></div>
<div class="a" style="left:915px;top:394px;width:79px;height:19px;background:#dde9dc"></div>
<div class="t" style="left:30px;width:48px;text-align:right;top:397px;color:#000">7</div>
<div class="t" style="left:83px;top:397px;color:#000">14.09.2021</div>
<div class="t" style="left:182px;top:397px;color:#000">Предварительная вертикальная планировка</div>
<div class="t" style="left:473px;top:397px;color:#000">м3</div>
<div class="t" style="left:571px;width:165px;text-align:right;top:397px;color:#000">13,2</div>
<div class="t" style="left:738px;width:173px;text-align:right;top:397px;color:#000">4,4</div>
<div class="a" style="left:1383px;top:396px;width:13px;height:13px;border:1px solid #857a6b;background:#f4f2ee"></div>
<div class="a" style="left:15px;top:414px;width:15px;height:20px;background:linear-gradient(#f3f0ea,#e4ded2)"></div>
<div class="a" style="left:15px;top:434px;width:15px;height:1px;background:#8c7b69"></div>
<div class="a" style="left:31px;top:434px;width:1370px;height:1px;background:#eae7e0"></div>
<div class="a" style="left:915px;top:415px;width:79px;height:19px;background:#dde9dc"></div>
<div class="t" style="left:30px;width:48px;text-align:right;top:418px;color:#000">8</div>
<div class="t" style="left:83px;top:418px;color:#000">15.09.2021</div>
<div class="t" style="left:182px;top:418px;color:#000">Предварительная вертикальная планировка</div>
<div class="t" style="left:473px;top:418px;color:#000">м3</div>
<div class="t" style="left:571px;width:165px;text-align:right;top:418px;color:#000">13,2</div>
<div class="t" style="left:738px;width:173px;text-align:right;top:418px;color:#000">4,2</div>
<div class="a" style="left:1383px;top:417px;width:13px;height:13px;border:1px solid #857a6b;background:#f4f2ee"></div>
<div class="a" style="left:15px;top:435px;width:15px;height:20px;background:linear-gradient(#f3f0ea,#e4ded2)"></div>
<div class="a" style="left:15px;top:455px;width:15px;height:1px;background:#8c7b69"></div>
<svg class="a" style="left:19px;top:441px" width="6" height="8" viewBox="0 0 6 8"><path d="M1 0.5 L5 4 L1 7.5 Z" fill="#7d7466"/></svg>
<div class="a" style="left:31px;top:435px;width:1370px;height:20px;background:#316ac5"></div>
<div class="a" style="left:31px;top:455px;width:1370px;height:1px;background:#eae7e0"></div>
<div class="t" style="left:30px;width:48px;text-align:right;top:439px;color:#fff">9</div>
<div class="t" style="left:84px;top:439px;color:#fff">16.09.2021</div>
<div class="t" style="left:183px;top:439px;color:#fff">Предварительная вертикальная планировка</div>
<div class="t" style="left:473px;top:439px;color:#fff">м3</div>
<div class="t" style="left:571px;width:165px;text-align:right;top:439px;color:#fff">13,2</div>
<div class="t" style="left:738px;width:173px;text-align:right;top:439px;color:#fff">4,6</div>
<div class="a" style="left:1382px;top:437px;width:15px;height:15px;background:#fff"></div>
<div class="a" style="left:1383px;top:438px;width:13px;height:13px;border:1px solid #857a6b;background:#f4f2ee"></div>
<div class="a" style="left:15px;top:456px;width:15px;height:20px;background:linear-gradient(#f3f0ea,#e4ded2)"></div>
<div class="a" style="left:15px;top:476px;width:15px;height:1px;background:#8c7b69"></div>
<div class="a" style="left:31px;top:476px;width:1370px;height:1px;background:#eae7e0"></div>
<div class="a" style="left:915px;top:457px;width:79px;height:19px;background:#dde9dc"></div>
<div class="t" style="left:30px;width:48px;text-align:right;top:460px;color:#000">10</div>
<div class="t" style="left:83px;top:460px;color:#000">15.09.2021</div>
<div class="t" style="left:182px;top:460px;color:#000">Ограждение и освещение строительной площадки</div>
<div class="t" style="left:473px;top:460px;color:#000">м2</div>
<div class="t" style="left:571px;width:165px;text-align:right;top:460px;color:#000">60</div>
<div class="t" style="left:738px;width:173px;text-align:right;top:460px;color:#000">20</div>
<div class="a" style="left:1383px;top:459px;width:13px;height:13px;border:1px solid #857a6b;background:#f4f2ee"></div>
<div class="a" style="left:15px;top:477px;width:15px;height:20px;background:linear-gradient(#f3f0ea,#e4ded2)"></div>
<div class="a" style="left:15px;top:497px;width:15px;height:1px;background:#8c7b69"></div>
<div class="a" style="left:31px;top:497px;width:1370px;height:1px;background:#eae7e0"></div>
<div class="a" style="left:915px;top:478px;width:79px;height:19px;background:#dde9dc"></div>
<div class="t" style="left:30px;width:48px;text-align:right;top:481px;color:#000">11</div>
<div class="t" style="left:83px;top:481px;color:#000">16.09.2021</div>
<div class="t" style="left:182px;top:481px;color:#000">Ограждение и освещение строительной площадки</div>
<div class="t" style="left:473px;top:481px;color:#000">м2</div>
<div class="t" style="left:571px;width:165px;text-align:right;top:481px;color:#000">60</div>
<div class="t" style="left:738px;width:173px;text-align:right;top:481px;color:#000">20</div>
<div class="a" style="left:1383px;top:480px;width:13px;height:13px;border:1px solid #857a6b;background:#f4f2ee"></div>
<div class="a" style="left:15px;top:498px;width:15px;height:20px;background:linear-gradient(#f3f0ea,#e4ded2)"></div>
<div class="a" style="left:15px;top:518px;width:15px;height:1px;background:#8c7b69"></div>
<div class="a" style="left:31px;top:518px;width:1370px;height:1px;background:#eae7e0"></div>
<div class="a" style="left:915px;top:499px;width:79px;height:19px;background:#dde9dc"></div>
<div class="t" style="left:30px;width:48px;text-align:right;top:502px;color:#000">12</div>
<div class="t" style="left:83px;top:502px;color:#000">17.09.2021</div>
<div class="t" style="left:182px;top:502px;color:#000">Ограждение и освещение строительной площадки</div>
<div class="t" style="left:473px;top:502px;color:#000">м2</div>
<div class="t" style="left:571px;width:165px;text-align:right;top:502px;color:#000">60</div>
<div class="t" style="left:738px;width:173px;text-align:right;top:502px;color:#000">20</div>
<div class="a" style="left:1383px;top:501px;width:13px;height:13px;border:1px solid #857a6b;background:#f4f2ee"></div>
<div class="a" style="left:15px;top:519px;width:15px;height:20px;background:linear-gradient(#f3f0ea,#e4ded2)"></div>
<div class="a" style="left:15px;top:539px;width:15px;height:1px;background:#8c7b69"></div>
<div class="a" style="left:31px;top:539px;width:1370px;height:1px;background:#eae7e0"></div>
<div class="a" style="left:915px;top:520px;width:79px;height:19px;background:#dde9dc"></div>
<div class="t" style="left:30px;width:48px;text-align:right;top:523px;color:#000">13</div>
<div class="t" style="left:83px;top:523px;color:#000">15.09.2021</div>
<div class="t" style="left:182px;top:523px;color:#000">Забивка железобетонных свай</div>
<div class="t" style="left:473px;top:523px;color:#000">п/м</div>
<div class="t" style="left:571px;width:165px;text-align:right;top:523px;color:#000">148</div>
<div class="t" style="left:738px;width:173px;text-align:right;top:523px;color:#000">29,6</div>
<div class="a" style="left:1383px;top:522px;width:13px;height:13px;border:1px solid #857a6b;background:#f4f2ee"></div>
<div class="a" style="left:15px;top:540px;width:15px;height:20px;background:linear-gradient(#f3f0ea,#e4ded2)"></div>
<div class="a" style="left:15px;top:560px;width:15px;height:1px;background:#8c7b69"></div>
<div class="a" style="left:31px;top:560px;width:1370px;height:1px;background:#eae7e0"></div>
<div class="a" style="left:915px;top:541px;width:79px;height:19px;background:#dde9dc"></div>
<div class="t" style="left:30px;width:48px;text-align:right;top:544px;color:#000">14</div>
<div class="t" style="left:83px;top:544px;color:#000">16.09.2021</div>
<div class="t" style="left:182px;top:544px;color:#000">Забивка железобетонных свай</div>
<div class="t" style="left:473px;top:544px;color:#000">п/м</div>
<div class="t" style="left:571px;width:165px;text-align:right;top:544px;color:#000">148</div>
<div class="t" style="left:738px;width:173px;text-align:right;top:544px;color:#000">29,6</div>
<div class="a" style="left:1383px;top:543px;width:13px;height:13px;border:1px solid #857a6b;background:#f4f2ee"></div>
<div class="a" style="left:15px;top:561px;width:15px;height:20px;background:linear-gradient(#f3f0ea,#e4ded2)"></div>
<div class="a" style="left:15px;top:581px;width:15px;height:1px;background:#8c7b69"></div>
<div class="a" style="left:31px;top:581px;width:1370px;height:1px;background:#eae7e0"></div>
<div class="a" style="left:915px;top:562px;width:79px;height:19px;background:#dde9dc"></div>
<div class="t" style="left:30px;width:48px;text-align:right;top:565px;color:#000">15</div>
<div class="t" style="left:83px;top:565px;color:#000">17.09.2021</div>
<div class="t" style="left:182px;top:565px;color:#000">Забивка железобетонных свай</div>
<div class="t" style="left:473px;top:565px;color:#000">п/м</div>
<div class="t" style="left:571px;width:165px;text-align:right;top:565px;color:#000">148</div>
<div class="t" style="left:738px;width:173px;text-align:right;top:565px;color:#000">29,6</div>
<div class="a" style="left:1383px;top:564px;width:13px;height:13px;border:1px solid #857a6b;background:#f4f2ee"></div>
<div class="a" style="left:15px;top:582px;width:15px;height:20px;background:linear-gradient(#f3f0ea,#e4ded2)"></div>
<div class="a" style="left:15px;top:602px;width:15px;height:1px;background:#8c7b69"></div>
<div class="a" style="left:31px;top:602px;width:1370px;height:1px;background:#eae7e0"></div>
<div class="a" style="left:915px;top:583px;width:79px;height:19px;background:#dde9dc"></div>
<div class="t" style="left:30px;width:48px;text-align:right;top:586px;color:#000">16</div>
<div class="t" style="left:83px;top:586px;color:#000">18.09.2021</div>
<div class="t" style="left:182px;top:586px;color:#000">Забивка железобетонных свай</div>
<div class="t" style="left:473px;top:586px;color:#000">п/м</div>
<div class="t" style="left:571px;width:165px;text-align:right;top:586px;color:#000">148</div>
<div class="t" style="left:738px;width:173px;text-align:right;top:586px;color:#000">29,6</div>
<div class="a" style="left:1383px;top:585px;width:13px;height:13px;border:1px solid #857a6b;background:#f4f2ee"></div>
<div class="a" style="left:15px;top:603px;width:15px;height:20px;background:linear-gradient(#f3f0ea,#e4ded2)"></div>
<div class="a" style="left:15px;top:623px;width:15px;height:1px;background:#8c7b69"></div>
<div class="a" style="left:31px;top:623px;width:1370px;height:1px;background:#eae7e0"></div>
<div class="a" style="left:915px;top:604px;width:79px;height:19px;background:#dde9dc"></div>
<div class="t" style="left:30px;width:48px;text-align:right;top:607px;color:#000">17</div>
<div class="t" style="left:83px;top:607px;color:#000">19.09.2021</div>
<div class="t" style="left:182px;top:607px;color:#000">Забивка железобетонных свай</div>
<div class="t" style="left:473px;top:607px;color:#000">п/м</div>
<div class="t" style="left:571px;width:165px;text-align:right;top:607px;color:#000">148</div>
<div class="t" style="left:738px;width:173px;text-align:right;top:607px;color:#000">29,6</div>
<div class="a" style="left:1383px;top:606px;width:13px;height:13px;border:1px solid #857a6b;background:#f4f2ee"></div>
<div class="a" style="left:15px;top:624px;width:15px;height:20px;background:linear-gradient(#f3f0ea,#e4ded2)"></div>
<div class="a" style="left:15px;top:644px;width:15px;height:1px;background:#8c7b69"></div>
<div class="a" style="left:31px;top:644px;width:1370px;height:1px;background:#eae7e0"></div>
<div class="a" style="left:915px;top:625px;width:79px;height:19px;background:#dde9dc"></div>
<div class="t" style="left:30px;width:48px;text-align:right;top:628px;color:#000">18</div>
<div class="t" style="left:83px;top:628px;color:#000">16.09.2021</div>
<div class="t" style="left:182px;top:628px;color:#000">Отбивка оголовок свай</div>
<div class="t" style="left:473px;top:628px;color:#000">шт.</div>
<div class="t" style="left:571px;width:165px;text-align:right;top:628px;color:#000">37</div>
<div class="t" style="left:738px;width:173px;text-align:right;top:628px;color:#000">18,5</div>
<div class="a" style="left:1383px;top:627px;width:13px;height:13px;border:1px solid #857a6b;background:#f4f2ee"></div>
<div class="a" style="left:15px;top:645px;width:15px;height:20px;background:linear-gradient(#f3f0ea,#e4ded2)"></div>
<div class="a" style="left:15px;top:665px;width:15px;height:1px;background:#8c7b69"></div>
<div class="a" style="left:31px;top:665px;width:1370px;height:1px;background:#eae7e0"></div>
<div class="a" style="left:915px;top:646px;width:79px;height:19px;background:#dde9dc"></div>
<div class="t" style="left:30px;width:48px;text-align:right;top:649px;color:#000">19</div>
<div class="t" style="left:83px;top:649px;color:#000">17.09.2021</div>
<div class="t" style="left:182px;top:649px;color:#000">Отбивка оголовок свай</div>
<div class="t" style="left:473px;top:649px;color:#000">шт.</div>
<div class="t" style="left:571px;width:165px;text-align:right;top:649px;color:#000">37</div>
<div class="t" style="left:738px;width:173px;text-align:right;top:649px;color:#000">18,5</div>
<div class="a" style="left:1383px;top:648px;width:13px;height:13px;border:1px solid #857a6b;background:#f4f2ee"></div>
<div class="a" style="left:15px;top:666px;width:15px;height:20px;background:linear-gradient(#f3f0ea,#e4ded2)"></div>
<div class="a" style="left:15px;top:686px;width:15px;height:1px;background:#8c7b69"></div>
<div class="a" style="left:31px;top:686px;width:1370px;height:1px;background:#eae7e0"></div>
<div class="a" style="left:915px;top:667px;width:79px;height:19px;background:#dde9dc"></div>
<div class="t" style="left:30px;width:48px;text-align:right;top:670px;color:#000">20</div>
<div class="t" style="left:83px;top:670px;color:#000">17.09.2021</div>
<div class="t" style="left:182px;top:670px;color:#000">Уборка отходов свай</div>
<div class="t" style="left:473px;top:670px;color:#000"></div>
<div class="t" style="left:571px;width:165px;text-align:right;top:670px;color:#000">1</div>
<div class="t" style="left:738px;width:173px;text-align:right;top:670px;color:#000">1</div>
<div class="a" style="left:1383px;top:669px;width:13px;height:13px;border:1px solid #857a6b;background:#f4f2ee"></div>
<div class="a" style="left:30px;top:267px;width:1px;height:420px;background:#8c7b69"></div>
<div class="a" style="left:80px;top:267px;width:1px;height:420px;background:#eae7e0"></div>
<div class="a" style="left:180px;top:267px;width:1px;height:420px;background:#eae7e0"></div>
<div class="a" style="left:471px;top:267px;width:1px;height:420px;background:#eae7e0"></div>
<div class="a" style="left:571px;top:267px;width:1px;height:420px;background:#eae7e0"></div>
<div class="a" style="left:738px;top:267px;width:1px;height:420px;background:#eae7e0"></div>
<div class="a" style="left:913px;top:267px;width:1px;height:420px;background:#eae7e0"></div>
<div class="a" style="left:995px;top:267px;width:1px;height:420px;background:#eae7e0"></div>
<div class="a" style="left:1077px;top:267px;width:1px;height:420px;background:#eae7e0"></div>
<div class="a" style="left:1217px;top:267px;width:1px;height:420px;background:#eae7e0"></div>
<div class="a" style="left:1376px;top:267px;width:1px;height:420px;background:#eae7e0"></div>
<div class="a" style="left:1401px;top:267px;width:1px;height:420px;background:#eae7e0"></div>
<div class="a" style="left:472px;top:435px;width:99px;height:20px;border:1px solid #41577a;background:#fff"></div>
<div class="t" style="left:473px;top:439px;">м3</div>
<!--SELFIX-->
<div class="a" style="left:8px;top:712px;width:1420px;height:22px;border-top:1px solid #8a8e92;background:#efecea"></div>
<div class="t" style="left:10px;top:718px;letter-spacing:0.12px">Группа компаний "АЛТИУС"</div>
<div class="t" style="left:159px;top:717px;font-size:10px;font-weight:bold">&copy;</div>
<div class="t" style="left:171px;top:718px;letter-spacing:-0.2px">www.altius.ru</div>
<svg class="a" style="left:1418px;top:724px" width="8" height="8" viewBox="0 0 8 8"><g fill="#a4a29c"><rect x="6" y="0" width="1" height="1"/><rect x="3" y="3" width="1" height="1"/><rect x="6" y="3" width="1" height="1"/><rect x="0" y="6" width="1" height="1"/><rect x="3" y="6" width="1" height="1"/><rect x="6" y="6" width="1" height="1"/></g></svg>
</body></html>
